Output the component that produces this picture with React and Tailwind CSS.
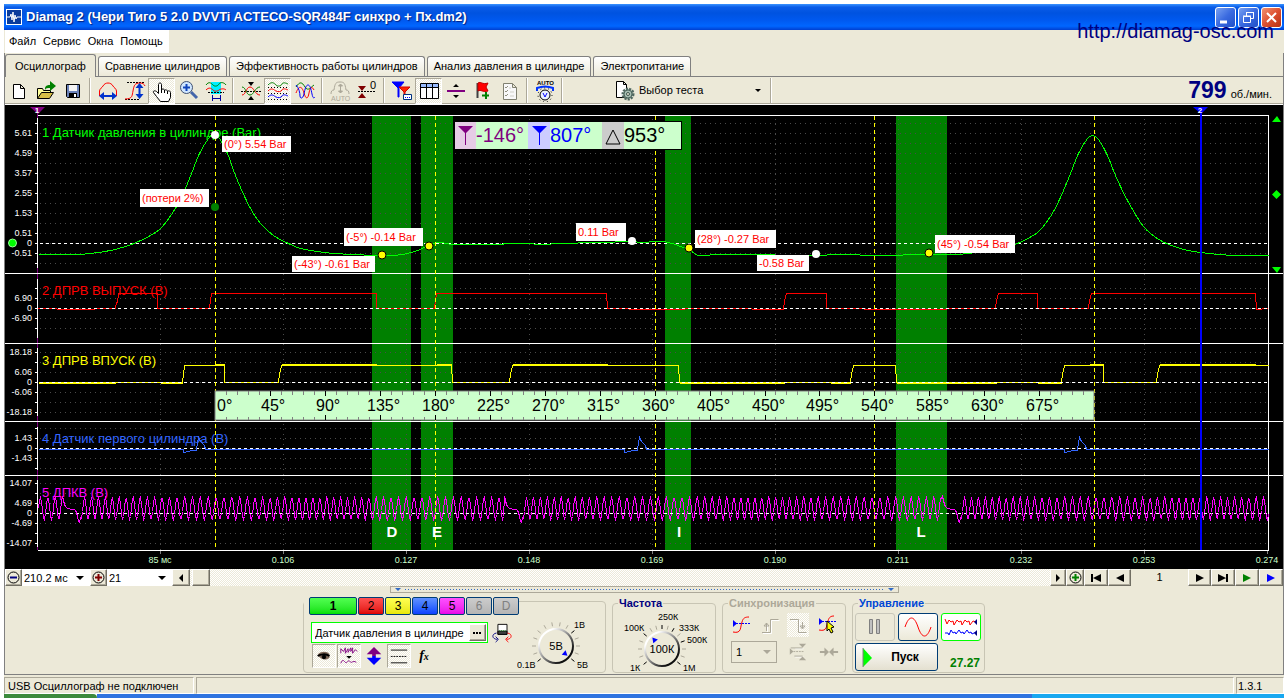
import { useState } from 'react';
import clsx from 'clsx';

const CHECKER = 'bg-[repeating-conic-gradient(#ffffff_0_25%,#ece9d8_0_50%)] bg-[length:2px_2px]';

/* ---------- chart data ---------- */

const PRESSURE = [
    [38, 254], [75, 254], [90, 253], [110, 250], [125, 246], [138, 241], [150, 235], [160, 228],
    [171, 214], [181, 197], [191, 173], [199, 153], [208, 138], [213, 134], [219, 138],
    [227, 153], [233, 170], [240, 187], [250, 208], [260, 223], [273, 235], [288, 243], [300, 248],
    [317, 251], [333, 253], [355, 254], [373, 255], [388, 255], [402, 254], [417, 250], [430, 244],
    [440, 242], [452, 244], [470, 244], [490, 244], [520, 243], [545, 244], [556, 243], [600, 242],
    [632, 241], [640, 242], [660, 241], [672, 243], [680, 246], [689, 249], [694, 253], [700, 255],
    [720, 254], [755, 254], [800, 255], [850, 254], [870, 255], [930, 254], [953, 254], [968, 253],
    [990, 250], [1004, 247], [1017, 243], [1037, 232], [1050, 216], [1060, 197], [1070, 173],
    [1078, 153], [1087, 138], [1092, 135], [1098, 139], [1107, 155], [1115, 175], [1127, 200],
    [1143, 226], [1160, 240], [1180, 248], [1200, 252], [1233, 255], [1268, 255],
];

const EXHAUST = [
    [38, 308], [75, 309], [115, 308], [116, 302], [117, 302], [118, 293], [157, 293], [157, 308],
    [209, 308], [210, 300], [211, 293], [376, 293], [376, 308], [434, 308], [435, 300], [436, 293],
    [606, 293], [607, 308], [650, 309], [720, 308], [783, 309], [784, 300], [786, 293], [826, 293],
    [826, 308], [900, 309], [995, 308], [996, 300], [998, 293], [1037, 293], [1037, 308],
    [1088, 308], [1089, 300], [1091, 293], [1255, 293], [1256, 309], [1268, 308],
];

const INTAKE = [
    [38, 382], [182, 382], [183, 374], [184, 365], [224, 365], [224, 382], [278, 382],
    [279, 374], [281, 365], [451, 365], [452, 382], [509, 382], [510, 374], [512, 365], [678, 365],
    [679, 382], [850, 382], [851, 374], [853, 365], [895, 365], [896, 382], [1061, 382],
    [1062, 374], [1064, 365], [1103, 365], [1103, 382], [1156, 382], [1157, 374], [1159, 365], [1268, 365],
];

const spark = (x) => [
    [x, 449], [x, 452], [x + 5, 451], [x + 8, 450], [x + 13, 450], [x + 14, 442], [x + 15, 437],
    [x + 17, 441], [x + 21, 445], [x + 22, 449],
];
const FIRST_CYL = [[38, 449], ...spark(183), ...spark(624), ...spark(1064), [1268, 449]];

// crank wheel: 58 teeth and a gap, tooth pitch follows the shaft speed
const crankSignal = () => {
    const pts = [];
    const gaps = [62, 504, 942];
    let phase = 0;
    for (let x = 38; x <= 1268; x += 1) {
        const gap = gaps.find((g) => x >= g && x <= g + 18);
        if (gap !== undefined) {
            const shape = [496, 500, 504, 506, 507, 508, 508, 508, 509, 509, 509, 509, 509, 510, 512, 516, 521, 522, 517];
            pts.push([x, shape[x - gap]]);
            phase = -1.2;
        } else {
            pts.push([x, Math.round(508 - 11 * Math.sin(phase))]);
            phase += (2 * Math.PI) / (7.4 + 0.5 * Math.cos((2 * Math.PI * (x - 215)) / 220));
        }
    }
    return pts;
};
const CRANK = crankSignal();

const toPoints = (pts) => pts.map((p) => p.join(',')).join(' ');

const smoothPath = (pts) => {
    let d = `M${pts[0][0]} ${pts[0][1]}`;
    for (let i = 0; i < pts.length - 1; i++) {
        const p0 = pts[i - 1] || pts[i];
        const p1 = pts[i];
        const p2 = pts[i + 1];
        const p3 = pts[i + 2] || p2;
        d += ` C${p1[0] + (p2[0] - p0[0]) / 6} ${p1[1] + (p2[1] - p0[1]) / 6} ${p2[0] - (p3[0] - p1[0]) / 6} ${p2[1] - (p3[1] - p1[1]) / 6} ${p2[0]} ${p2[1]}`;
    }
    return d;
};

const CHANNELS = [
    { title: '1 Датчик давления в цилиндре (Bar)', color: '#00ff00', titleY: 137, zero: 243, from: 118, to: 268, first: 123, last: 263, labels: { 133: '5.61', 153: '4.59', 173: '3.57', 193: '2.55', 213: '1.53', 233: '0.51', 243: '0', 253: '-0.51' } },
    { title: '2 ДПРВ ВЫПУСК (В)', color: '#ff0000', titleY: 295, zero: 308, from: 279, to: 338, first: 288, last: 328, labels: { 298: '6.90', 308: '0', 318: '-6.90' } },
    { title: '3 ДПРВ ВПУСК (В)', color: '#ffff00', titleY: 365, zero: 382, from: 348, to: 416, first: 352, last: 412, labels: { 352: '18.18', 372: '6.06', 382: '0', 392: '-6.06', 412: '-18.18' } },
    { title: '4 Датчик первого цилиндра (В)', color: '#3366ff', titleY: 443, zero: 448, from: 427, to: 470, first: 428, last: 468, labels: { 438: '1.43', 448: '0', 458: '-1.43' } },
    { title: '5 ДПКВ (В)', color: '#ff00ff', titleY: 497, zero: 513, from: 480, to: 547, first: 483, last: 543, labels: { 483: '14.07', 503: '4.69', 513: '0', 523: '-4.69', 543: '-14.07' } },
];

const PHASES = [
    { name: 'D', x: 372, w: 39, tx: 392 },
    { name: 'E', x: 421, w: 32, tx: 437 },
    { name: 'I', x: 665, w: 26, tx: 679 },
    { name: 'L', x: 896, w: 51, tx: 921 },
];

const TIMES = ['85 мс', '0.106', '0.127', '0.148', '0.169', '0.190', '0.211', '0.232', '0.253', '0.274'];

const CALLOUTS = [
    { text: '(0°) 5.54 Bar', x: 222, y: 136, w: 69, h: 16 },
    { text: '(потери 2%)', x: 140, y: 189, w: 69, h: 18 },
    { text: '(-5°) -0.14 Bar', x: 344, y: 228, w: 79, h: 18 },
    { text: '(-43°) -0.61 Bar', x: 292, y: 256, w: 83, h: 16 },
    { text: '0.11 Bar', x: 576, y: 223, w: 50, h: 18 },
    { text: '(28°) -0.27 Bar', x: 695, y: 230, w: 81, h: 18 },
    { text: '-0.58 Bar', x: 757, y: 255, w: 52, h: 16 },
    { text: '(45°) -0.54 Bar', x: 935, y: 235, w: 80, h: 18 },
];

const DOTS = [
    [215, 135, '#fff'], [215, 207, '#008000'], [382, 255, '#ff0'], [429, 246, '#ff0'],
    [632, 241, '#fff'], [689, 248, '#ff0'], [816, 254, '#fff'], [929, 253, '#ff0'],
];

const range = (from, to, step) => {
    const out = [];
    for (let v = from; v <= to; v += step) out.push(v);
    return out;
};

const Ruler = () => (
    <g>
        <rect x="215" y="391" width="879" height="29" fill="#ccffcc" stroke="#808080" strokeWidth="1" />
        {range(1, 79, 1).map((i) => {
            const x = Math.round(215 + i * 10.99) + 0.5;
            const major = i % 5 === 0;
            return (
                <path
                    key={i}
                    d={`M${x} 391v${major ? 5 : 4}M${x} 420v${major ? -5 : -3}`}
                    stroke={major ? '#000' : '#808080'}
                />
            );
        })}
        <text x="217" y="411" fontSize="16" fill="#000">0°</text>
        {range(1, 15, 1).map((i) => (
            <text key={i} x={Math.round(215 + i * 54.95 - (i < 3 ? 9 : 13))} y="411" fontSize="16" fill="#000">
                {i * 45}°
            </text>
        ))}
    </g>
);

const AngleBox = () => (
    <g>
        <rect x="454" y="121" width="228" height="29" fill="#000" />
        <rect x="455" y="122" width="226" height="27" fill="#ccffcc" />
        <rect x="455" y="122" width="21" height="27" fill="#e6cce6" />
        <rect x="528" y="122" width="22" height="27" fill="#ccccff" />
        <rect x="602" y="122" width="22" height="27" fill="#cccccc" />
        <path d="M458 126h15l-7 7v12h-1v-12z" fill="#800080" />
        <path d="M532 126h15l-7 7v12h-1v-12z" fill="#0000ff" />
        <path d="M613 130l7 14h-14z" fill="none" stroke="#000" />
        <g fontSize="20">
            <text x="476" y="142" fill="#800080">-146°</text>
            <text x="550" y="142" fill="#0000ff">807°</text>
            <text x="624" y="142" fill="#000">953°</text>
        </g>
    </g>
);

const Scope = () => (
    <svg
        viewBox="5 105 1278 464"
        className="block w-full bg-black"
        fontFamily="'Liberation Sans', Arial, sans-serif"
        role="img"
        aria-label="Осциллограмма"
    >
        <g shapeRendering="crispEdges">
            {PHASES.map((p) => (
                <rect key={p.name} x={p.x} y="116" width={p.w} height="434" fill="#008000" />
            ))}
            <g stroke="#4a4a4a" strokeDasharray="1 4">
                {CHANNELS.map((c) =>
                    range(c.first, c.last, 10).map((y) => <path key={y} d={`M40 ${y}.5H1268`} />)
                )}
                {range(160, 1144, 123).map((x) => <path key={x} d={`M${x}.5 119V550`} />)}
            </g>

            <path d="M37.5 110V550" stroke="#800080" />
            <path d="M38 115.5H1268.5V550.5H38M5 273.5H1283M5 343.5H1283M5 421.5H1283M5 475.5H1283" fill="none" stroke="#fff" />
            {CHANNELS.map((c) => (
                <g key={c.title}>
                    <path d={`M37.5 ${c.from}V${c.to}`} stroke="#fff" />
                    {range(c.first, c.last, 10).map((y) => <path key={y} d={`M35 ${y}.5h3`} stroke="#fff" />)}
                </g>
            ))}
            {TIMES.map((t, i) => <path key={t} d={`M${160 + i * 123}.5 551v3`} stroke="#808080" />)}
        </g>

        {CHANNELS.map((c) => (
            <g key={c.title}>
                <text x="42" y={c.titleY} fontSize="13" fill={c.color}>{c.title}</text>
                {Object.entries(c.labels).map(([y, label]) => (
                    <text key={y} x="32" y={Number(y) + 3} fontSize="9" textAnchor="end" fill="#fff">{label}</text>
                ))}
            </g>
        ))}

        <g fill="none" shapeRendering="crispEdges">
            <g transform="translate(0.5 0.5)">
                <polyline points={toPoints(EXHAUST)} stroke="#ff0000" />
                <polyline points={toPoints(INTAKE)} stroke="#ffff00" />
                <path d="M38 383H115M160 383h22M215 364h9M281 364h95M436 364h15M512 364h95M679 383h105M830 383h20M896 383h100M1037 383h24M1089 364h14M1159 364h96" stroke="#ffff00" />
            </g>
            {CHANNELS.map((c) => (
                <path key={c.title} d={`M40 ${c.zero}.5H1268`} stroke="#fff" strokeDasharray="3 3" />
            ))}
            <g transform="translate(0.5 0.5)">
                <path d={smoothPath(PRESSURE)} stroke="#00ff00" />
                <polyline points={toPoints(FIRST_CYL)} stroke="#3366ff" />
                <polyline points={toPoints(CRANK)} stroke="#ff00ff" />
            </g>
            <path d="M215.5 116V550M435.5 116V550M655.5 116V550M874.5 116V550M1094.5 116V550" stroke="#ffff00" strokeDasharray="4 3" />
            <path d="M1201 110V550" stroke="#0000ff" strokeWidth="2" />
        </g>

        <Ruler />
        <AngleBox />

        <path d="M30 107h15l-7 7z" fill="#800080" />
        <path d="M1193 107h15l-7 7z" fill="#0000ff" />
        <g fontSize="8" fontWeight="bold" fill="#fff" textAnchor="middle">
            <text x="37" y="113">1</text>
            <text x="1200" y="113">2</text>
        </g>

        {CALLOUTS.map((c) => (
            <g key={c.text}>
                <rect x={c.x} y={c.y} width={c.w} height={c.h} fill="#fff" />
                <text x={c.x + 2} y={c.y + (c.h === 16 ? 12 : 13)} fontSize="11" fill="#ff0000">{c.text}</text>
            </g>
        ))}
        {DOTS.map(([x, y, fill]) => (
            <circle key={`${x}-${y}`} cx={x} cy={y} r="4" fill={fill} stroke={fill === '#ff0' ? '#000' : 'none'} />
        ))}

        <g fontSize="15" fontWeight="bold" fill="#fff" textAnchor="middle">
            {PHASES.map((p) => <text key={p.name} x={p.tx} y="537">{p.name}</text>)}
        </g>
        <g fontSize="9" fill="#ccffcc" textAnchor="middle">
            {TIMES.map((t, i) => <text key={t} x={160 + i * 123} y="563">{t}</text>)}
        </g>

        <circle cx="12.5" cy="243" r="4" fill="#00ff00" stroke="#99ff99" />
        <path d="M1272 122h9l-4-6zM1272 267h9l-4 6zM1276.5 190l4.500 4.500-4.500 4.500-4.500-4.500z" fill="#00ff00" />
    </svg>
);

/* ---------- toolbar icons ---------- */

const Icon = ({ children, size = 22 }) => (
    <svg width={size} height={size} viewBox="0 0 22 22" fill="none" stroke="#000" aria-hidden="true">{children}</svg>
);

const NewIcon = () => <Icon><path d="M5.500 4.500h7l4 4v10h-11zM12.500 4.500v4h4" fill="#fff" /></Icon>;
const OpenIcon = () => (
    <Icon>
        <path d="M2.500 18.500v-10h5l1 2h7v3" fill="#ffff99" />
        <path d="M2.500 18.500l4-6h12l-4 6z" fill="#d8c048" />
        <path d="M10 10V8c1-3 3-3 5-3V1l6 5-6 5V8c-3 0-4 0-5 2z" fill="#008000" stroke="none" />
    </Icon>
);
const SaveIcon = () => (
    <Icon>
        <path d="M4.500 4.500h13v13h-12l-1-1z" fill="#6b82b8" />
        <path d="M7 5h8v6H7z" fill="#f4f4f4" stroke="none" />
        <path d="M7 13h8v4H7z" fill="#000" stroke="none" />
        <path d="M12 14h2v3h-2z" fill="#fff" stroke="none" />
    </Icon>
);
const PeriodIcon = () => (
    <Icon>
        <path d="M2.500 16V11C3 8 5 8 6 6c2-4 8-4 10 0 1 2 3 2 3.500 5v5" stroke="#ff0000" />
        <path d="M5 16h12" stroke="#0033cc" strokeWidth="2" />
        <path d="M2 16l5-4v8zM20 16l-5-4v8z" fill="#0033cc" stroke="none" />
    </Icon>
);
const AmplitudeIcon = () => (
    <Icon>
        <path d="M3 2.500h18M1 19.500h15" strokeDasharray="2 1" />
        <path d="M1 19c8 0 7-4 8-8 1-6 2-8 7-8 3 0 4 1 5 3" stroke="#ff0000" />
        <path d="M15.500 5v12" stroke="#0033cc" strokeWidth="2" />
        <path d="M15.500 3l-4 5h8zM15.500 19l-4-5h8z" fill="#0033cc" stroke="none" />
    </Icon>
);
const HandIcon = () => (
    <Icon>
        <path d="M7.500 13.500V4.500c0-2 3-2 3 0v6c0-2 3-2 3 0 0-1 3-1 3 1 0-1 3-1 3 1v5l-2 4h-8l-4-5-3-4c-1-2 2-2 3-1z" fill="#fff" />
        <path d="M10.500 9v4M13.500 10v3M16.500 11v3" />
    </Icon>
);
const ZoomIcon = () => (
    <Icon>
        <path d="M13 12l6 6" stroke="#4466aa" strokeWidth="3" />
        <circle cx="8.500" cy="7.500" r="6" fill="#cfe6ff" stroke="#405070" />
        <path d="M5 7.500h7M8.500 4v7" stroke="#1144bb" strokeWidth="2" />
    </Icon>
);
const MarkersIcon = () => (
    <Icon>
        <path d="M6 2h10v12H6z" fill="#00eeff" stroke="none" />
        <path d="M1 5c3-4 5-2 7 0s5 1 6-1 5-2 7 1" stroke="#008000" />
        <path d="M1 10c3-3 5-2 7 0s5 1 6 0 5-2 7 0" stroke="#ff0000" />
        <path d="M3 12.500h16" strokeDasharray="2 1" />
        <path d="M7.500 15v6M15.500 15v6M8 18.500h8" stroke="#0000a0" />
    </Icon>
);
const ScaleAllIcon = () => (
    <Icon>
        <path d="M1 11.500h20" strokeDasharray="2 1" />
        <path d="M2 15c4 0 4-8 8-8s5 8 10 8" stroke="#ff0000" />
        <path d="M2 7c4 0 4 8 8 8s5-8 10-8" stroke="#008000" />
        <path d="M8 2h6l-3 4zM8 20h6l-3-4z" fill="#000" stroke="none" />
    </Icon>
);
const ThreeWavesIcon = () => (
    <Icon>
        <path d="M1 5c4-4 6-2 8 0s5 1 6-1 4-1 6 0" stroke="#008000" />
        <path d="M1 11c4-4 6-1 8 0s5 1 6-1 4-1 6 0" stroke="#ff0000" />
        <path d="M1 17c4-4 6-1 8 0s5 1 6-1 4-1 6 0" stroke="#0000ff" />
        <path d="M1 7.500h20M1 13.500h20M1 19.500h20" strokeDasharray="1 2" />
    </Icon>
);
const OverlayWavesIcon = () => (
    <Icon>
        <path d="M2 7c4-6 6-5 9 0s6 0 9-2" stroke="#008000" />
        <path d="M2 13c3-8 6-7 8 0s4 6 5 0 3-7 5-3" stroke="#ff0000" />
        <path d="M2 5c3 3 4 8 4 11s3 3 4-2 2-9 4-9 3 4 4 9 2 4 3 3" stroke="#0000ff" />
    </Icon>
);
const AutoIcon = () => (
    <Icon>
        <g stroke="#aca899">
            <path d="M2 14c0-3 1-4 3-4 1-7 2-8 6-8s5 1 6 8c2 0 3 1 3 4M11.500 5v8" />
            <path d="M11.500 4l-2 2h4zM11.500 13l-2-2h4z" fill="#aca899" />
        </g>
        <text x="2" y="21" fontSize="7" fill="#aca899" stroke="none" fontFamily="Liberation Sans">AUTO</text>
    </Icon>
);
const ZeroIcon = () => (
    <Icon>
        <path d="M2 6h8l-4 5zM2 18h8l-4-5z" fill="#800000" stroke="none" />
        <path d="M2 11.500h18" strokeDasharray="2 1" />
        <text x="14" y="9" fontSize="11" fill="#000" stroke="none" fontFamily="Liberation Sans">0</text>
    </Icon>
);
const FiltersIcon = () => (
    <Icon>
        <path d="M1 2h12L8 8v9H7V8z" fill="#0000ff" stroke="#0000ff" />
        <path d="M8 7h11l-5 5v5h-1v-5z" fill="#ff2200" stroke="#d00000" />
        <path d="M12.500 14.500h8v5h-8z" fill="#fff" stroke="#003080" />
        <path d="M14 17.500h5" stroke="#0000ff" strokeDasharray="1 1" />
    </Icon>
);
const TableIcon = () => (
    <Icon>
        <path d="M2.500 3.500h18v15h-18z" fill="#fff" />
        <path d="M3 4h17v3H3z" fill="#99bbff" stroke="none" />
        <path d="M2.500 7.500h18M8.500 4v14M14.500 4v14" />
    </Icon>
);
const SplitIcon = () => (
    <Icon>
        <path d="M2 11h18" stroke="#800080" strokeWidth="2" />
        <path d="M8 7h6l-3-3zM8 15h6l-3 3z" fill="#000" stroke="none" />
    </Icon>
);
const FlagIcon = () => (
    <Icon>
        <path d="M5.500 3v15" strokeWidth="2" stroke="#404040" />
        <path d="M6 3c3-2 4 2 10 0l-2 4 2 4c-5 2-7-2-10 0z" fill="#ff0000" stroke="#c00000" />
        <path d="M14 12v7M10 15.500h7" stroke="#008000" strokeWidth="2" />
    </Icon>
);
const ReportIcon = () => (
    <Icon>
        <path d="M4.500 3.500h9l4 4v12h-13zM13.500 3.500v4h4" fill="#f8f8f8" stroke="#808070" />
        <path d="M6 7l1 1 2-2M6 11l1 1 2-2M6 15l1 1 2-2" stroke="#909080" />
        <path d="M11 12h4M11 16h4M10 8h2" stroke="#d0d0c8" />
    </Icon>
);
const AutoVoltIcon = () => (
    <Icon>
        <text x="3" y="5" fontSize="6" fontWeight="bold" fill="#000" stroke="none" fontFamily="Liberation Sans">AUTO</text>
        <path d="M3 11V8c5-2 11-2 16 0v3" stroke="#0033ff" strokeWidth="2" />
        <circle cx="11" cy="15" r="5" fill="#e8f0ff" />
        <circle cx="11" cy="15" r="7" strokeDasharray="1 3" />
        <path d="M9 13l2 4 2-4" stroke="#0000ff" />
    </Icon>
);
const TestIcon = () => (
    <Icon>
        <path d="M3.500 1.500h7l3 3v13h-10zM10.500 1.500v3h3" fill="#fff" />
        <circle cx="15" cy="14" r="5" stroke="#506860" strokeWidth="3" strokeDasharray="2 1" fill="#9ab8a8" />
        <circle cx="15" cy="14" r="4" fill="#a8c0b4" stroke="#506860" />
        <circle cx="15" cy="14" r="1.500" fill="#ece9d8" stroke="#405850" />
    </Icon>
);

const TOOL_GROUPS = [
    [['Новый', NewIcon], ['Открыть', OpenIcon], ['Сохранить', SaveIcon]],
    [['Период', PeriodIcon], ['Амплитуда', AmplitudeIcon], ['Рука', HandIcon, true], ['Масштаб', ZoomIcon], ['Маркеры', MarkersIcon]],
    [['Вписать', ScaleAllIcon], ['Раздельно', ThreeWavesIcon, true], ['Наложить', OverlayWavesIcon]],
    [['Авто', AutoIcon], ['Ноль', ZeroIcon]],
    [['Фильтры', FiltersIcon], ['Таблица', TableIcon, true], ['Разделитель', SplitIcon], ['Закладка', FlagIcon], ['Отчёт', ReportIcon]],
    [['Автодиапазон', AutoVoltIcon]],
];

const Separator = () => (
    <div className="flex w-2 justify-center self-stretch py-px">
        <div className="w-[2px] border-r border-white bg-[#aca899]" />
    </div>
);

const Toolbar = () => (
    <div className="flex h-7 items-center border-b border-white shadow-[inset_0_-1px_0_#aca899]">
        {TOOL_GROUPS.map((group, i) => (
            <div key={i} className="flex h-full items-center">
                {group.map(([name, Glyph, pressed]) => (
                    <button
                        key={name}
                        type="button"
                        title={name}
                        aria-pressed={Boolean(pressed)}
                        className={clsx(
                            'flex h-[26px] w-[27px] items-center justify-center',
                            pressed && `border border-t-[#aca899] border-r-white border-b-white border-l-[#aca899] ${CHECKER}`
                        )}
                    >
                        <Glyph />
                    </button>
                ))}
                <Separator />
            </div>
        ))}
        <button type="button" className="flex h-full w-[201px] items-center pr-1.5 pl-[47px]">
            <TestIcon />
            <span className="ml-1">Выбор теста</span>
            <svg width="6" height="4" viewBox="0 0 6 4" className="ml-auto"><path d="M0 0h6L3 3z" /></svg>
        </button>
        <Separator />
        <div className="ml-auto flex items-baseline gap-1 pr-[11px]">
            <span className="text-[23px] leading-6 font-bold text-[#000080]">799</span>
            об./мин.
        </div>
    </div>
);

/* ---------- header ---------- */

const CaptionButton = ({ label, close, children }) => (
    <button
        type="button"
        aria-label={label}
        className={clsx(
            'flex size-[21px] items-center justify-center rounded-[3px] border border-white',
            close
                ? 'bg-linear-to-br from-[#f09070] via-[#dd5030] to-[#b83010]'
                : 'bg-linear-to-br from-[#7aa0f0] via-[#3a6ae0] to-[#2050c8]'
        )}
    >
        <svg width="19" height="19" viewBox="0 0 19 19" fill="none" stroke="#fff" strokeWidth="2">{children}</svg>
    </button>
);

const TitleBar = () => (
    <header className="relative flex h-[26px] items-center gap-1 bg-[linear-gradient(#3a93ff_0,#0a5ce8_12%,#0053e0_35%,#0058ee_60%,#0066ff_85%,#003fd0_100%)] pr-[2px] pl-[2px]">
        <svg width="16" height="16" viewBox="0 0 16 16" aria-hidden="true">
            <rect width="16" height="16" fill="#fff" />
            <rect x="1" y="1" width="14" height="14" fill="#0a3c9c" />
            <path d="M1 8h3l1-3 1 6 1-8 1 10 1-7 1 4 1-2h4" fill="none" stroke="#fff" />
        </svg>
        <h1 className="text-[13px] font-bold whitespace-pre text-white [text-shadow:1px_1px_1px_#002080]">
            Diamag 2 (Чери Тиго 5 2.0 DVVTi ACTECO-SQR484F синхро + Пх.dm2)
        </h1>
        <div className="ml-auto flex gap-[2px]">
            <CaptionButton label="Свернуть"><path d="M4 14h7" strokeWidth="3" /></CaptionButton>
            <CaptionButton label="Восстановить">
                <path d="M4.500 8.500h7v6h-7zM4 8h8M7.500 8V4.500h7v6H12M7 4.500h8" strokeWidth="1" />
            </CaptionButton>
            <CaptionButton label="Закрыть" close><path d="M5 5l9 9M14 5l-9 9" /></CaptionButton>
        </div>
        <a href="http://diamag-osc.com" className="absolute top-[15px] right-[10px] text-xl leading-6 text-[#000080]">
            http://diamag-osc.com
        </a>
    </header>
);

const MenuBar = () => (
    <nav className="flex h-[23px]">
        <div className="ml-px flex items-center gap-[7px] bg-white pr-[6px] pl-1">
            {['Файл', 'Сервис', 'Окна', 'Помощь'].map((item) => (
                <button key={item} type="button">{item}</button>
            ))}
        </div>
    </nav>
);

const TABS = ['Осциллограф', 'Сравнение цилиндров', 'Эффективность работы цилиндров', 'Анализ давления в цилиндре', 'Электропитание'];

const Tabs = () => {
    const [active, setActive] = useState(TABS[0]);
    return (
        <div role="tablist" className="flex h-6 items-end gap-[2px] border-b border-[#808080]">
            {TABS.map((tab) => (
                <button
                    key={tab}
                    type="button"
                    role="tab"
                    aria-selected={tab === active}
                    onClick={() => setActive(tab)}
                    className={clsx(
                        'rounded-t-[3px] border border-b-0 border-[#808080]',
                        tab === active
                            ? '-mb-px h-[23px] bg-[#ece9d8] px-[9px]'
                            : 'h-5 bg-linear-to-b from-white to-[#ece9d8] px-[6px]'
                    )}
                >
                    {tab}
                </button>
            ))}
        </div>
    );
};

/* ---------- scroll row ---------- */

const RAISED = 'flex items-center justify-center border border-t-white border-r-[#716f64] border-b-[#716f64] border-l-white bg-[#ece9d8] shadow-[inset_-1px_-1px_0_#aca899]';

const RoundSign = ({ color, plus }) => (
    <svg width="13" height="13" viewBox="0 0 13 13" fill="none">
        <circle cx="6.500" cy="6.500" r="5.500" stroke="#000" fill="#ece9d8" />
        <path d={plus ? 'M3 6.500h7M6.500 3v7' : 'M3 6.500h7'} stroke={color} strokeWidth="2" />
    </svg>
);

const FlatSelect = ({ label, value, className }) => (
    <div className={clsx('relative h-full bg-white', className)}>
        <select aria-label={label} className="h-full w-full appearance-none bg-white pl-[2px] leading-4" defaultValue={value}>
            <option>{value}</option>
        </select>
        <svg width="8" height="5" viewBox="0 0 8 5" className="pointer-events-none absolute top-[7px] right-[6px]"><path d="M0 0h8L4 4z" /></svg>
    </div>
);

const NavButton = ({ label, width, color = '#000', d }) => (
    <button type="button" aria-label={label} className={clsx(RAISED, 'h-full', width)}>
        <svg width="12" height="10" viewBox="0 0 12 10" fill={color} stroke="none"><path d={d} /></svg>
    </button>
);

const ScrollRow = () => (
    <div className="flex h-[17px]">
        <button type="button" aria-label="Сжать" className={clsx(RAISED, 'w-[17px]')}><RoundSign color="#000080" /></button>
        <FlatSelect label="Развёртка" value="210.2 мс" className="w-[68px]" />
        <button type="button" aria-label="Растянуть" className={clsx(RAISED, 'w-[17px]')}><RoundSign color="#800000" plus /></button>
        <FlatSelect label="Масштаб" value="21" className="w-[65px]" />
        <div className={clsx('flex flex-1', CHECKER)}>
            <NavButton label="Влево" width="w-[18px]" d="M8 1v8L4 5z" />
            <div className={clsx(RAISED, 'ml-[2px] w-[18px]')} />
            <div className="flex-1" />
            <NavButton label="Вправо" width="w-[16px]" d="M4 1v8l4-4z" />
        </div>
        <button type="button" aria-label="Добавить" className={clsx(RAISED, 'w-[18px]')}><RoundSign color="#008000" plus /></button>
        <div className="flex">
            <NavButton label="В начало" width="w-[24px]" d="M1 1h2v8H1zM11 1v8L3 5z" />
            <NavButton label="Назад" width="w-[23px]" d="M10 1v8L2 5z" />
            <span className="w-[57px] text-center leading-[17px]">1</span>
            <NavButton label="Вперёд" width="w-[23px]" d="M2 1v8l8-4z" />
            <NavButton label="В конец" width="w-[24px]" d="M9 1h2v8H9zM1 1v8l8-4z" />
            <NavButton label="Воспроизвести" width="w-[24px]" color="#008000" d="M2 1v8l8-4z" />
            <NavButton label="Следующий" width="w-[24px]" color="#0000ff" d="M2 1v8l8-4z" />
        </div>
    </div>
);

const Splitter = () => (
    <div className="mx-auto flex h-[7px] w-[509px] items-center gap-1 border border-[#aca899] px-1">
        <svg width="6" height="4" viewBox="0 0 6 4" fill="#316ac5"><path d="M0 0h6L3 3z" /></svg>
        <div className="h-px flex-1 bg-[repeating-linear-gradient(90deg,#316ac5_0_1px,transparent_1px_3px)]" />
        <svg width="6" height="4" viewBox="0 0 6 4" fill="#316ac5"><path d="M0 0h6L3 3z" /></svg>
    </div>
);

/* ---------- control panels ---------- */

const CHANNEL_BUTTONS = [
    ['1', 'w-12 font-bold bg-linear-to-b from-[#50ff50] to-[#00e000] border-[#003c74]'],
    ['2', 'w-[26px] bg-linear-to-b from-[#ff5050] to-[#e00000] border-[#003c74]'],
    ['3', 'w-[26px] bg-linear-to-b from-[#ffff50] to-[#e8e800] border-[#003c74]'],
    ['4', 'w-[26px] bg-linear-to-b from-[#6090ff] to-[#1040ff] border-[#003c74]'],
    ['5', 'w-[26px] bg-linear-to-b from-[#ff50ff] to-[#e800e8] border-[#003c74]'],
    ['6', 'w-[26px] bg-linear-to-b from-[#cccccc] to-[#b4b4b4] border-[#003c74] text-[#808080]'],
    ['D', 'w-[26px] bg-linear-to-b from-[#cccccc] to-[#b4b4b4] border-[#003c74] text-[#808080]'],
];

const MINI_TOOLS = [
    ['Видимость', true, (
        <g key="eye">
            <path d="M4 10c2-4 10-5 13-1v4c-3 3-9 3-13-3z" fill="#806858" stroke="none" />
            <path d="M4 11c3-2 9-3 13 0" stroke="#000" strokeWidth="2" />
            <circle cx="11" cy="12" r="2" fill="#000" />
        </g>
    )],
    ['Сглаживание', true, (
        <g key="wave" stroke="#800080">
            <path d="M2 8V3l3 3 2-4v6l3-5v4l3-5v4l2-4v6l3-4 2 2" />
            <path d="M8 11h6l-3 3z" fill="#000" stroke="none" />
            <path d="M2 19c2-5 3-3 5-1s3-4 5-1 3-2 7 1" />
        </g>
    )],
    ['Сдвиг', false, (
        <g key="shift" stroke="none">
            <path d="M11 1l8 8h-6v2H9V9H3z" fill="#800080" />
            <path d="M11 21l8-8h-6v-2H9v2H3z" fill="#0000ff" />
        </g>
    )],
    ['Уровни', true, (
        <g key="levels">
            <path d="M2 4.500h18M2 18.500h18" />
            <path d="M2 11.500h18" strokeDasharray="2 1" />
        </g>
    )],
];

const polar = (cx, cy, r, deg) => {
    const a = (deg * Math.PI) / 180;
    return `${Math.round((cx + r * Math.sin(a)) * 10) / 10} ${Math.round((cy - r * Math.cos(a)) * 10) / 10}`;
};

const Dial = ({ id, cx, cy, value, marks, ticks, pointer }) => (
    <g fontSize="9" fill="#000">
        <defs>
            <linearGradient id={id} x1="0" y1="0" x2="1" y2="1">
                <stop offset="0.200" stopColor="#ffffff" />
                <stop offset="0.800" stopColor="#101010" />
            </linearGradient>
        </defs>
        {ticks.map(([deg, strong]) => (
            <path key={deg} d={`M${polar(cx, cy, 20, deg)}L${polar(cx, cy, 24, deg)}`} stroke={strong ? '#000' : '#aca899'} />
        ))}
        <circle cx={cx} cy={cy} r="17" fill="#ece9d8" stroke={`url(#${id})`} strokeWidth="2" />
        <path d="M0-15l3 5h-6z" fill="#0000ff" transform={`translate(${cx} ${cy}) rotate(${pointer})`} />
        <text x={cx} y={cy + 4} fontSize="11" textAnchor="middle">{value}</text>
        {marks.map(([x, y, label]) => <text key={label} x={x} y={y}>{label}</text>)}
    </g>
);

const dialTicks = (strong) => range(-130, 130, 20).map((d) => [d, strong.includes(d)]);

const GROUP = 'rounded-[4px] border border-[#c8c5b4]';

const ChannelPanel = () => (
    <section className={clsx(GROUP, 'mt-2 flex h-[72px] w-[303px]')} aria-label="Канал">
        <div className="flex w-[215px] flex-col">
            <div className="-mt-[5px] flex gap-px bg-[#ece9d8] pl-[5px]">
                {CHANNEL_BUTTONS.map(([name, look]) => (
                    <button key={name} type="button" className={clsx('h-[18px] rounded-[2px] border text-xs leading-4', look)}>{name}</button>
                ))}
            </div>
            <div className="mt-[7px] flex items-center gap-1 pl-[7px]">
                <div className="flex h-[21px] w-[177px] items-center border border-[#00ff00] bg-white p-px">
                    <input
                        type="text"
                        aria-label="Название канала"
                        defaultValue="Датчик давления в цилиндре"
                        className="h-full w-[156px] min-w-0 pl-[2px] outline-none"
                    />
                    <button type="button" aria-label="Выбрать датчик" className={clsx(RAISED, 'h-[17px] w-[17px]')}>
                        <svg width="9" height="2" viewBox="0 0 9 2"><path d="M0 0h2v2H0zM3 0h2v2H3zM6 0h2v2H6z" /></svg>
                    </button>
                </div>
                <button type="button" aria-label="Поменять каналы">
                    <Icon size={20}>
                        <path d="M6.500 1.500h10v11h-10z" fill="#fff" />
                        <path d="M6.500 9h10v3.500h-10z" fill="#404040" />
                        <path d="M8 8.500h7" stroke="#008000" strokeDasharray="1 1" />
                        <path d="M5 11c-6 1-5 7 1 7M4 15l3 3-3 3" stroke="#000080" />
                        <path d="M17 11c6 1 5 7-1 7M18 15l-3 3 3 3" stroke="#ff0000" />
                    </Icon>
                </button>
            </div>
            <div className="mt-px flex gap-px pl-2">
                {MINI_TOOLS.map(([name, pressed, glyph]) => (
                    <button
                        key={name}
                        type="button"
                        aria-label={name}
                        aria-pressed={pressed}
                        className={clsx(
                            'flex size-6 items-center justify-center',
                            pressed && `border border-t-[#aca899] border-r-white border-b-white border-l-[#aca899] ${CHECKER}`
                        )}
                    >
                        <Icon size={20}>{glyph}</Icon>
                    </button>
                ))}
                <button type="button" aria-label="Формула" className="size-6 font-['Liberation_Serif',serif] text-sm leading-5 font-bold italic">
                    f<span className="text-[10px]">x</span>
                </button>
            </div>
        </div>
        <svg width="86" height="70" viewBox="518 602 86 70" className="-ml-[2px]" fontFamily="'Liberation Sans', Arial, sans-serif">
            <Dial
                id="volts"
                cx={557}
                cy={646}
                value="5В"
                pointer={130}
                ticks={dialTicks([-130, 50, 130])}
                marks={[[575, 628, '1В'], [518, 668, '0.1В'], [578, 668, '5В']]}
            />
        </svg>
    </section>
);

const FrequencyPanel = () => (
    <fieldset className={clsx(GROUP, 'w-[104px]')}>
        <legend className="ml-[5px] px-px font-bold leading-4 text-[#000080]">Частота</legend>
        <svg width="102" height="63" viewBox="612 608 102 63" fontFamily="'Liberation Sans', Arial, sans-serif">
            <Dial
                id="rate"
                cx={661}
                cy={646}
                value="100К"
                pointer={-40}
                ticks={[-130, -110, -90, -70, -50, -30, -15, 0, 15, 30, 50, 70, 90, 110, 130].map((d) => [d, [-130, -50, 0, 30, 70, 130].includes(d)])}
                marks={[[657, 617, '250К'], [623, 628, '100К'], [678, 628, '333К'], [686, 640, '500К'], [629, 668, '1К'], [682, 668, '1М']]}
            />
        </svg>
    </fieldset>
);

const SyncPanel = () => (
    <fieldset className={clsx(GROUP, 'w-[124px]')}>
        <legend className="ml-[5px] px-px font-bold leading-4 text-[#aca899]">Синхронизация</legend>
        <div className="grid grid-cols-4 justify-items-center px-1 pt-[2px]">
            <button type="button" aria-label="Уровень" className="h-6">
                <Icon>
                    <path d="M3 9.500h17" stroke="#0000ff" strokeDasharray="2 1" />
                    <path d="M3 18c9 2 7-5 9-10 1-4 3-5 7-5" stroke="#ff0000" />
                    <path d="M3 6v7l4-3.500z" fill="#0000ff" stroke="none" />
                </Icon>
            </button>
            <button type="button" aria-label="Фронт" className="h-6">
                <Icon>
                    <path d="M4 19.500h8.500v-13h8M8.500 18v-7" stroke="#fff" />
                    <path d="M3 18.500h8.500v-13h8M7.500 17V9M5 12l2.500-3 2.500 3z" stroke="#aca899" />
                </Icon>
            </button>
            <button type="button" aria-label="Спад" className={clsx('h-6', CHECKER)}>
                <Icon>
                    <path d="M4 6.500h8M12.500 6v13.500h8" stroke="#fff" />
                    <path d="M3 5.500h8.500v13h8M15.500 8v6M13 12l2.500 3 2.500-3z" stroke="#aca899" />
                </Icon>
            </button>
            <button type="button" aria-label="Захват" className="h-6">
                <Icon>
                    <path d="M3 7.500h17" stroke="#0000ff" strokeDasharray="2 1" />
                    <path d="M3 16c9 2 7-5 9-9 1-4 3-5 6-5" stroke="#ff0000" />
                    <path d="M3 4v7l4-3.500z" fill="#0000ff" stroke="none" />
                    <path d="M11 7l7 6-3 1 2 4-2 1-2-4-2 2z" fill="#ffff00" />
                </Icon>
            </button>
        </div>
        <div className="flex items-center gap-[5px] pt-1 pl-[8px]">
            <div className="relative">
                <select disabled aria-label="Канал синхронизации" defaultValue="1" className="h-[22px] w-[46px] appearance-none border border-[#aca899] pl-1 text-black opacity-100">
                    <option>1</option>
                </select>
                <svg width="8" height="5" viewBox="0 0 8 5" fill="#aca899" className="pointer-events-none absolute top-[9px] right-[6px]"><path d="M0 0h8L4 4z" /></svg>
            </div>
            <div className="flex flex-1 justify-around">
                <Icon size={20}>
                    <path d="M8 7.500h9M8 16.500h9" stroke="#fff" />
                    <g stroke="#aca899">
                        <path d="M2 7v7l4-3.500z" fill="#aca899" stroke="none" />
                        <path d="M3 6.500h13M7 15.500h9" />
                        <path d="M6 10.500h11" strokeDasharray="2 1" />
                        <path d="M12 2h8l-4 4zM12 20h8l-4-4z" fill="#aca899" stroke="none" />
                    </g>
                </Icon>
                <Icon size={20}>
                    <path d="M1 10h5V6l5 5-5 5v-4H1zM21 10h-5V6l-5 5 5 5v-4h5z" fill="#aca899" stroke="none" />
                </Icon>
            </div>
        </div>
    </fieldset>
);

const XP_BUTTON = 'flex items-center justify-center rounded-[3px] border';

const ControlPanel = () => (
    <fieldset className={clsx(GROUP, 'w-[133px]')}>
        <legend className="ml-[5px] px-px font-bold leading-4 text-[#0046d5]">Управление</legend>
        <div className="flex gap-[3px] pt-[2px] pl-[2px]">
            <button type="button" aria-label="Пауза" disabled className={clsx(XP_BUTTON, 'h-7 w-10 border-[#c9c7ba] bg-[#ece9d8]')}>
                <svg width="12" height="16" viewBox="0 0 12 16" fill="#c0c0c0" stroke="#808080"><path d="M.5.5h3v14h-3zM7.500.5h3v14h-3z" /></svg>
            </button>
            <button type="button" aria-label="Осциллограмма" className={clsx(XP_BUTTON, 'h-7 w-10 border-[#003c74] bg-linear-to-b from-white to-[#ece9d8]')}>
                <svg width="30" height="22" viewBox="0 0 30 22" fill="none" stroke="#ff0000"><path d="M2 11C6-1 11-1 15 11s9 12 13 0" /></svg>
            </button>
            <button type="button" aria-label="Самописец" className={clsx(XP_BUTTON, 'h-7 w-10 border-[#00ff00] bg-white')}>
                <svg width="34" height="22" viewBox="0 0 34 22" fill="none">
                    <path d="M1 3l2 5 2-4 2 2 2-1 1 4 3-5 2 2 2-1 1 4 3-5 2 2 2-1 1 4 3-4 3 1" stroke="#ff0000" />
                    <path d="M1 17h3l1 2 2-5 2 3 2-1 1 2 3-4 2 3 2-1 1 2 3-4 2 3 2-1 1 2 4-2" stroke="#0000ff" />
                    <path d="M33 3v6l-3-3zM33 14v6l-3-3z" fill="#000080" />
                </svg>
            </button>
        </div>
        <div className="mt-[2px] flex items-end justify-between pr-1 pl-[2px]">
            <button type="button" className={clsx(XP_BUTTON, 'h-7 w-[83px] gap-[18px] border-[#003c74] bg-linear-to-b from-white to-[#e4e0d0] pr-3 text-xs font-bold')}>
                <svg width="11" height="19" viewBox="0 0 11 19"><path d="M1 0v19l9-9z" fill="#00ff00" /><path d="M1 0v19" stroke="#808080" /></svg>
                Пуск
            </button>
            <output className="text-xs leading-4 font-bold text-[#008000]">27.27</output>
        </div>
    </fieldset>
);

const StatusBar = () => (
    <footer className="mt-[2px] flex h-[17px] gap-[2px] leading-4">
        <div className="w-[190px] border border-t-[#aca899] border-r-white border-b-white border-l-[#aca899] pl-[3px]">USB Осциллограф не подключен</div>
        <div className="flex-1 border border-t-[#aca899] border-r-white border-b-white border-l-[#aca899]" />
        <div className="w-12 border border-t-[#aca899] border-r-white border-b-white border-l-[#aca899] pl-px">1.3.1</div>
    </footer>
);

export default function App() {
    return (
        <div className="min-h-screen bg-white px-1 pt-1 font-['Liberation_Sans',Arial,sans-serif] text-[11px] text-black">
            <div className="bg-[#ece9d8]">
                <TitleBar />
                <MenuBar />
                <main className="border-x border-b border-[#808080]">
                    <Tabs />
                    <Toolbar />
                    <Scope />
                    <ScrollRow />
                    <Splitter />
                    <div className="flex h-[81px] justify-center gap-[6px]">
                        <ChannelPanel />
                        <div className="flex h-20 gap-[6px] pt-[2px]">
                            <FrequencyPanel />
                            <SyncPanel />
                            <ControlPanel />
                        </div>
                    </div>
                </main>
                <StatusBar />
            </div>
            <div className="flex h-1">
                <div className="w-[93px] rounded-tr-lg bg-[#3c8a3c]" />
                <div className="flex-1 bg-[#2f74e0]" />
                <div className="w-[252px] bg-[#18a8f0]" />
            </div>
        </div>
    );
}
